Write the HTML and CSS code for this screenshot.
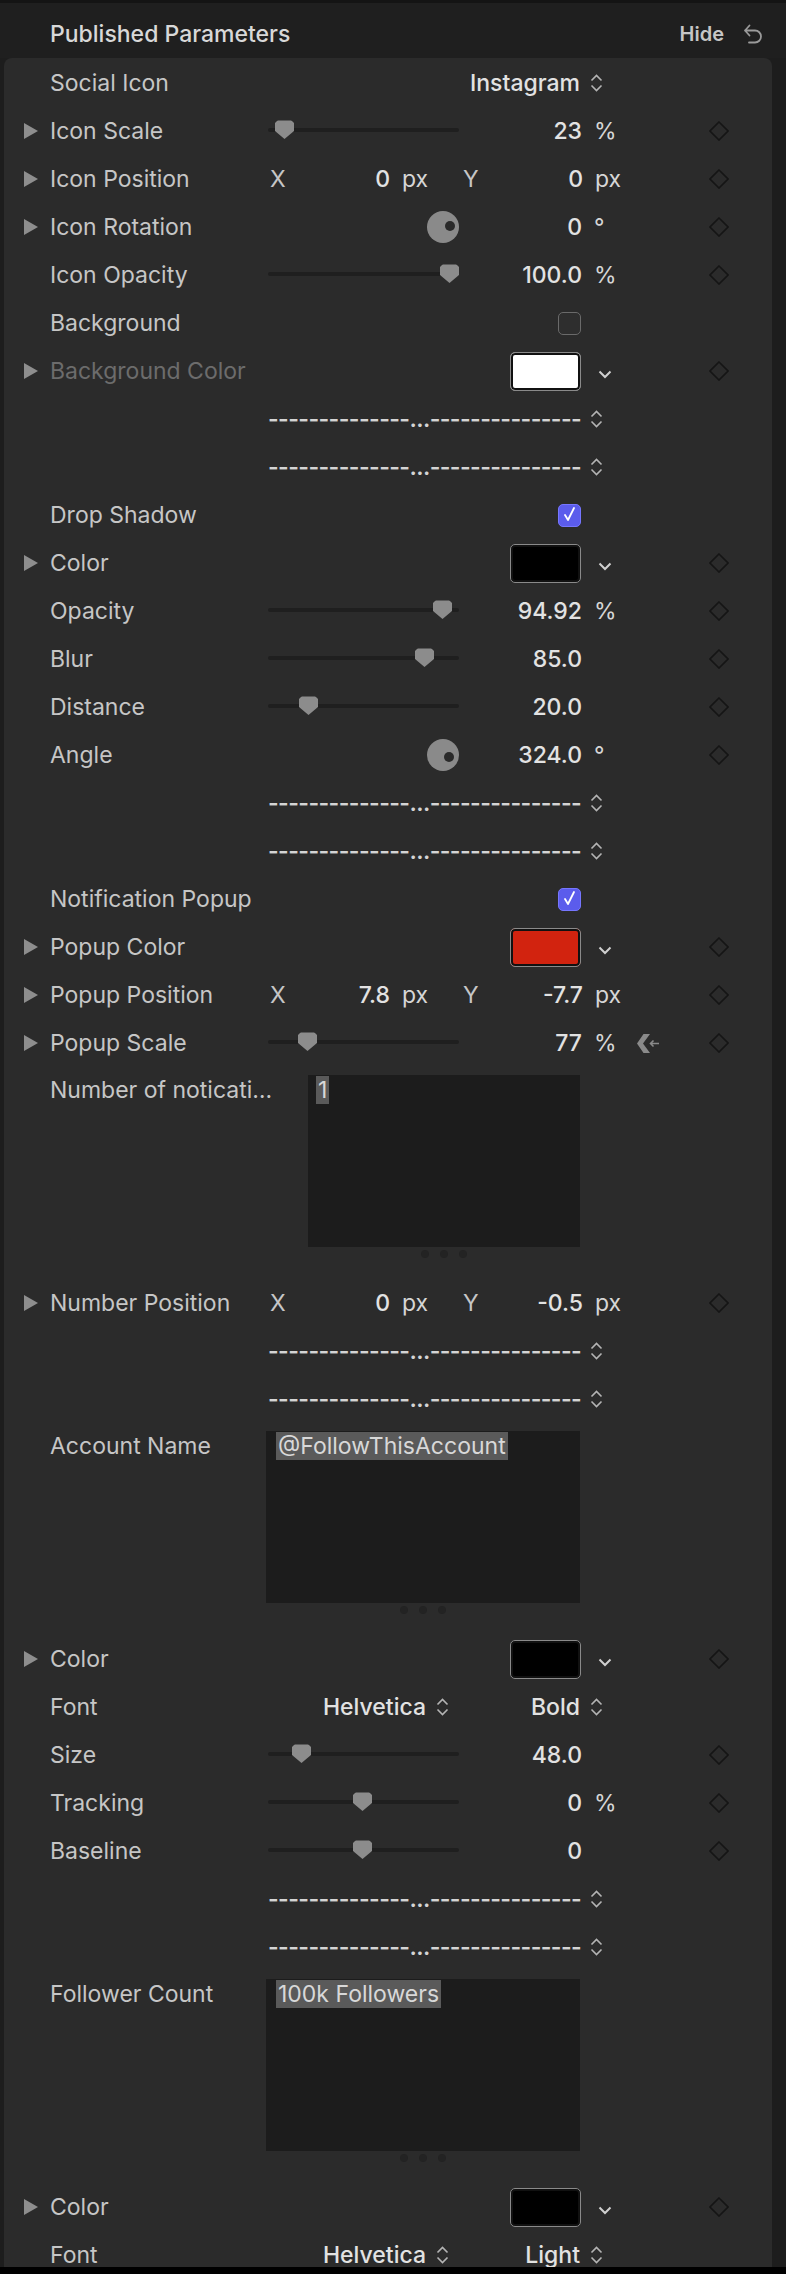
FILE: index.html
```html
<!DOCTYPE html>
<html lang="en">
<head>
    <meta charset="UTF-8">
    <meta name="viewport" content="width=device-width, initial-scale=1.0">
    <title>Published Parameters</title>
    <link rel="stylesheet" href="styles.css">
</head>
<body>
    <div class="inspector">
        <header class="header">
            <span class="title">Published Parameters</span>
            <span class="hide">Hide</span>
            <svg class="undo-icon" width="20" height="22" viewBox="0 0 20 22"><path d="M6.5 2.5 L2 7.5 L6.5 12.5 M2 7.5 H12 A6 6 0 0 1 12 19.5 H6" fill="none" stroke="#9a9a9a" stroke-width="1.8" stroke-linecap="round" stroke-linejoin="round"/></svg>
        </header>

        <div class="panel">
            <div class="param-row">
                <span></span>
                <span class="param-label">Social Icon</span>
                <div class="param-control">
                    <div class="widget"></div>
                    <span class="value popup-value">Instagram</span>
                    <svg class="updown" width="13" height="18" viewBox="0 0 13 18"><path d="M1.5 6.5 L6.5 1.5 L11.5 6.5 M1.5 11.5 L6.5 16.5 L11.5 11.5" fill="none" stroke="#b4b4b4" stroke-width="1.6"/></svg>
                </div>
                <span></span>
                <span></span>
            </div>

            <div class="param-row">
                <span class="disclosure"></span>
                <span class="param-label">Icon Scale</span>
                <div class="param-control">
                    <div class="widget"><div class="slider"><span class="slider-thumb" style="left: 7px"></span></div></div>
                    <span class="value">23</span>
                    <span class="unit">%</span>
                </div>
                <span></span>
                <span class="keyframe"><svg width="20" height="20" viewBox="0 0 20 20"><polygon points="10,1 19,10 10,19 1,10" fill="none" stroke="#151515" stroke-width="1.6"/></svg></span>
            </div>

            <div class="param-row">
                <span class="disclosure"></span>
                <span class="param-label">Icon Position</span>
                <div class="param-control point">
                    <span class="axis">X</span><span class="value">0</span><span class="unit">px</span>
                    <span class="axis">Y</span><span class="value">0</span><span class="unit">px</span>
                </div>
                <span></span>
                <span class="keyframe"><svg width="20" height="20" viewBox="0 0 20 20"><polygon points="10,1 19,10 10,19 1,10" fill="none" stroke="#151515" stroke-width="1.6"/></svg></span>
            </div>

            <div class="param-row">
                <span class="disclosure"></span>
                <span class="param-label">Icon Rotation</span>
                <div class="param-control">
                    <div class="widget"><span class="dial"><span class="dial-dot" style="left: 18px; top: 10px"></span></span></div>
                    <span class="value">0</span>
                    <span class="unit">°</span>
                </div>
                <span></span>
                <span class="keyframe"><svg width="20" height="20" viewBox="0 0 20 20"><polygon points="10,1 19,10 10,19 1,10" fill="none" stroke="#151515" stroke-width="1.6"/></svg></span>
            </div>

            <div class="param-row">
                <span></span>
                <span class="param-label">Icon Opacity</span>
                <div class="param-control">
                    <div class="widget"><div class="slider"><span class="slider-thumb" style="left: 172px"></span></div></div>
                    <span class="value">100.0</span>
                    <span class="unit">%</span>
                </div>
                <span></span>
                <span class="keyframe"><svg width="20" height="20" viewBox="0 0 20 20"><polygon points="10,1 19,10 10,19 1,10" fill="none" stroke="#151515" stroke-width="1.6"/></svg></span>
            </div>

            <div class="param-row">
                <span></span>
                <span class="param-label">Background</span>
                <div class="param-control">
                    <div class="widget"></div>
                    <span class="value"><span class="checkbox"></span></span>
                </div>
                <span></span>
                <span></span>
            </div>

            <div class="param-row">
                <span class="disclosure"></span>
                <span class="param-label dimmed">Background Color</span>
                <div class="param-control">
                    <div class="widget"></div>
                    <span class="value"><span class="color-well" style="background-color: #ffffff"></span></span>
                    <svg class="well-chevron" width="14" height="9" viewBox="0 0 14 9"><path d="M1.5 1.5 L7 7 L12.5 1.5" fill="none" stroke="#d0d0d0" stroke-width="2"/></svg>
                </div>
                <span></span>
                <span class="keyframe"><svg width="20" height="20" viewBox="0 0 20 20"><polygon points="10,1 19,10 10,19 1,10" fill="none" stroke="#151515" stroke-width="1.6"/></svg></span>
            </div>

            <div class="param-row">
                <span></span>
                <span></span>
                <div class="param-control">
                    <span class="dash-menu">--------------...---------------</span>
                    <svg class="updown" width="13" height="18" viewBox="0 0 13 18"><path d="M1.5 6.5 L6.5 1.5 L11.5 6.5 M1.5 11.5 L6.5 16.5 L11.5 11.5" fill="none" stroke="#b4b4b4" stroke-width="1.6"/></svg>
                </div>
                <span></span>
                <span></span>
            </div>

            <div class="param-row">
                <span></span>
                <span></span>
                <div class="param-control">
                    <span class="dash-menu">--------------...---------------</span>
                    <svg class="updown" width="13" height="18" viewBox="0 0 13 18"><path d="M1.5 6.5 L6.5 1.5 L11.5 6.5 M1.5 11.5 L6.5 16.5 L11.5 11.5" fill="none" stroke="#b4b4b4" stroke-width="1.6"/></svg>
                </div>
                <span></span>
                <span></span>
            </div>

            <div class="param-row">
                <span></span>
                <span class="param-label">Drop Shadow</span>
                <div class="param-control">
                    <div class="widget"></div>
                    <span class="value"><span class="checkbox checked"><svg width="23" height="23" viewBox="0 0 23 23"><path d="M7 12 L10 17 L16 5" fill="none" stroke="#ffffff" stroke-width="1.8" stroke-linecap="round" stroke-linejoin="round"/></svg></span></span>
                </div>
                <span></span>
                <span></span>
            </div>

            <div class="param-row">
                <span class="disclosure"></span>
                <span class="param-label">Color</span>
                <div class="param-control">
                    <div class="widget"></div>
                    <span class="value"><span class="color-well" style="background-color: #000000"></span></span>
                    <svg class="well-chevron" width="14" height="9" viewBox="0 0 14 9"><path d="M1.5 1.5 L7 7 L12.5 1.5" fill="none" stroke="#d0d0d0" stroke-width="2"/></svg>
                </div>
                <span></span>
                <span class="keyframe"><svg width="20" height="20" viewBox="0 0 20 20"><polygon points="10,1 19,10 10,19 1,10" fill="none" stroke="#151515" stroke-width="1.6"/></svg></span>
            </div>

            <div class="param-row">
                <span></span>
                <span class="param-label">Opacity</span>
                <div class="param-control">
                    <div class="widget"><div class="slider"><span class="slider-thumb" style="left: 165px"></span></div></div>
                    <span class="value">94.92</span>
                    <span class="unit">%</span>
                </div>
                <span></span>
                <span class="keyframe"><svg width="20" height="20" viewBox="0 0 20 20"><polygon points="10,1 19,10 10,19 1,10" fill="none" stroke="#151515" stroke-width="1.6"/></svg></span>
            </div>

            <div class="param-row">
                <span></span>
                <span class="param-label">Blur</span>
                <div class="param-control">
                    <div class="widget"><div class="slider"><span class="slider-thumb" style="left: 147px"></span></div></div>
                    <span class="value">85.0</span>
                </div>
                <span></span>
                <span class="keyframe"><svg width="20" height="20" viewBox="0 0 20 20"><polygon points="10,1 19,10 10,19 1,10" fill="none" stroke="#151515" stroke-width="1.6"/></svg></span>
            </div>

            <div class="param-row">
                <span></span>
                <span class="param-label">Distance</span>
                <div class="param-control">
                    <div class="widget"><div class="slider"><span class="slider-thumb" style="left: 31px"></span></div></div>
                    <span class="value">20.0</span>
                </div>
                <span></span>
                <span class="keyframe"><svg width="20" height="20" viewBox="0 0 20 20"><polygon points="10,1 19,10 10,19 1,10" fill="none" stroke="#151515" stroke-width="1.6"/></svg></span>
            </div>

            <div class="param-row">
                <span></span>
                <span class="param-label">Angle</span>
                <div class="param-control">
                    <div class="widget"><span class="dial"><span class="dial-dot" style="left: 17px; top: 13px"></span></span></div>
                    <span class="value">324.0</span>
                    <span class="unit">°</span>
                </div>
                <span></span>
                <span class="keyframe"><svg width="20" height="20" viewBox="0 0 20 20"><polygon points="10,1 19,10 10,19 1,10" fill="none" stroke="#151515" stroke-width="1.6"/></svg></span>
            </div>

            <div class="param-row">
                <span></span>
                <span></span>
                <div class="param-control">
                    <span class="dash-menu">--------------...---------------</span>
                    <svg class="updown" width="13" height="18" viewBox="0 0 13 18"><path d="M1.5 6.5 L6.5 1.5 L11.5 6.5 M1.5 11.5 L6.5 16.5 L11.5 11.5" fill="none" stroke="#b4b4b4" stroke-width="1.6"/></svg>
                </div>
                <span></span>
                <span></span>
            </div>

            <div class="param-row">
                <span></span>
                <span></span>
                <div class="param-control">
                    <span class="dash-menu">--------------...---------------</span>
                    <svg class="updown" width="13" height="18" viewBox="0 0 13 18"><path d="M1.5 6.5 L6.5 1.5 L11.5 6.5 M1.5 11.5 L6.5 16.5 L11.5 11.5" fill="none" stroke="#b4b4b4" stroke-width="1.6"/></svg>
                </div>
                <span></span>
                <span></span>
            </div>

            <div class="param-row">
                <span></span>
                <span class="param-label">Notification Popup</span>
                <div class="param-control">
                    <div class="widget"></div>
                    <span class="value"><span class="checkbox checked"><svg width="23" height="23" viewBox="0 0 23 23"><path d="M7 12 L10 17 L16 5" fill="none" stroke="#ffffff" stroke-width="1.8" stroke-linecap="round" stroke-linejoin="round"/></svg></span></span>
                </div>
                <span></span>
                <span></span>
            </div>

            <div class="param-row">
                <span class="disclosure"></span>
                <span class="param-label">Popup Color</span>
                <div class="param-control">
                    <div class="widget"></div>
                    <span class="value"><span class="color-well" style="background-color: #d2230f"></span></span>
                    <svg class="well-chevron" width="14" height="9" viewBox="0 0 14 9"><path d="M1.5 1.5 L7 7 L12.5 1.5" fill="none" stroke="#d0d0d0" stroke-width="2"/></svg>
                </div>
                <span></span>
                <span class="keyframe"><svg width="20" height="20" viewBox="0 0 20 20"><polygon points="10,1 19,10 10,19 1,10" fill="none" stroke="#151515" stroke-width="1.6"/></svg></span>
            </div>

            <div class="param-row">
                <span class="disclosure"></span>
                <span class="param-label">Popup Position</span>
                <div class="param-control point">
                    <span class="axis">X</span><span class="value">7.8</span><span class="unit">px</span>
                    <span class="axis">Y</span><span class="value">-7.7</span><span class="unit">px</span>
                </div>
                <span></span>
                <span class="keyframe"><svg width="20" height="20" viewBox="0 0 20 20"><polygon points="10,1 19,10 10,19 1,10" fill="none" stroke="#151515" stroke-width="1.6"/></svg></span>
            </div>

            <div class="param-row">
                <span class="disclosure"></span>
                <span class="param-label">Popup Scale</span>
                <div class="param-control">
                    <div class="widget"><div class="slider"><span class="slider-thumb" style="left: 30px"></span></div></div>
                    <span class="value">77</span>
                    <span class="unit">%</span>
                </div>
                <span class="link-icon"><svg width="22" height="19" viewBox="0 0 22 19"><polygon points="6.5,0 13,0 6,9.5 13,19 6.5,19 0,9.5" fill="#8a8a8a"/><path d="M22 9.5 H13.5 M16.5 6.5 L13.5 9.5 L16.5 12.5" fill="none" stroke="#8a8a8a" stroke-width="1.6"/></svg></span>
                <span class="keyframe"><svg width="20" height="20" viewBox="0 0 20 20"><polygon points="10,1 19,10 10,19 1,10" fill="none" stroke="#151515" stroke-width="1.6"/></svg></span>
            </div>

            <div class="text-row">
                <span class="param-label text-label wide">Number of notications</span>
                <div class="text-field narrow">
                    <div class="text-box"><span class="selected-text">1</span></div>
                    <div class="resize-dots"><span></span><span></span><span></span></div>
                </div>
            </div>

            <div class="param-row">
                <span class="disclosure"></span>
                <span class="param-label">Number Position</span>
                <div class="param-control point">
                    <span class="axis">X</span><span class="value">0</span><span class="unit">px</span>
                    <span class="axis">Y</span><span class="value">-0.5</span><span class="unit">px</span>
                </div>
                <span></span>
                <span class="keyframe"><svg width="20" height="20" viewBox="0 0 20 20"><polygon points="10,1 19,10 10,19 1,10" fill="none" stroke="#151515" stroke-width="1.6"/></svg></span>
            </div>

            <div class="param-row">
                <span></span>
                <span></span>
                <div class="param-control">
                    <span class="dash-menu">--------------...---------------</span>
                    <svg class="updown" width="13" height="18" viewBox="0 0 13 18"><path d="M1.5 6.5 L6.5 1.5 L11.5 6.5 M1.5 11.5 L6.5 16.5 L11.5 11.5" fill="none" stroke="#b4b4b4" stroke-width="1.6"/></svg>
                </div>
                <span></span>
                <span></span>
            </div>

            <div class="param-row">
                <span></span>
                <span></span>
                <div class="param-control">
                    <span class="dash-menu">--------------...---------------</span>
                    <svg class="updown" width="13" height="18" viewBox="0 0 13 18"><path d="M1.5 6.5 L6.5 1.5 L11.5 6.5 M1.5 11.5 L6.5 16.5 L11.5 11.5" fill="none" stroke="#b4b4b4" stroke-width="1.6"/></svg>
                </div>
                <span></span>
                <span></span>
            </div>

            <div class="text-row">
                <span class="param-label text-label">Account Name</span>
                <div class="text-field">
                    <div class="text-box"><span class="selected-text">@FollowThisAccount</span></div>
                    <div class="resize-dots"><span></span><span></span><span></span></div>
                </div>
            </div>

            <div class="param-row">
                <span class="disclosure"></span>
                <span class="param-label">Color</span>
                <div class="param-control">
                    <div class="widget"></div>
                    <span class="value"><span class="color-well" style="background-color: #000000"></span></span>
                    <svg class="well-chevron" width="14" height="9" viewBox="0 0 14 9"><path d="M1.5 1.5 L7 7 L12.5 1.5" fill="none" stroke="#d0d0d0" stroke-width="2"/></svg>
                </div>
                <span></span>
                <span class="keyframe"><svg width="20" height="20" viewBox="0 0 20 20"><polygon points="10,1 19,10 10,19 1,10" fill="none" stroke="#151515" stroke-width="1.6"/></svg></span>
            </div>

            <div class="param-row">
                <span></span>
                <span class="param-label">Font</span>
                <div class="param-control">
                    <div class="widget font-family">
                        <span class="popup-value">Helvetica</span>
                        <svg class="updown" width="13" height="18" viewBox="0 0 13 18"><path d="M1.5 6.5 L6.5 1.5 L11.5 6.5 M1.5 11.5 L6.5 16.5 L11.5 11.5" fill="none" stroke="#b4b4b4" stroke-width="1.6"/></svg>
                    </div>
                    <span class="value popup-value">Bold</span>
                    <svg class="updown" width="13" height="18" viewBox="0 0 13 18"><path d="M1.5 6.5 L6.5 1.5 L11.5 6.5 M1.5 11.5 L6.5 16.5 L11.5 11.5" fill="none" stroke="#b4b4b4" stroke-width="1.6"/></svg>
                </div>
                <span></span>
                <span></span>
            </div>

            <div class="param-row">
                <span></span>
                <span class="param-label">Size</span>
                <div class="param-control">
                    <div class="widget"><div class="slider"><span class="slider-thumb" style="left: 24px"></span></div></div>
                    <span class="value">48.0</span>
                </div>
                <span></span>
                <span class="keyframe"><svg width="20" height="20" viewBox="0 0 20 20"><polygon points="10,1 19,10 10,19 1,10" fill="none" stroke="#151515" stroke-width="1.6"/></svg></span>
            </div>

            <div class="param-row">
                <span></span>
                <span class="param-label">Tracking</span>
                <div class="param-control">
                    <div class="widget"><div class="slider"><span class="slider-thumb" style="left: 85px"></span></div></div>
                    <span class="value">0</span>
                    <span class="unit">%</span>
                </div>
                <span></span>
                <span class="keyframe"><svg width="20" height="20" viewBox="0 0 20 20"><polygon points="10,1 19,10 10,19 1,10" fill="none" stroke="#151515" stroke-width="1.6"/></svg></span>
            </div>

            <div class="param-row">
                <span></span>
                <span class="param-label">Baseline</span>
                <div class="param-control">
                    <div class="widget"><div class="slider"><span class="slider-thumb" style="left: 85px"></span></div></div>
                    <span class="value">0</span>
                </div>
                <span></span>
                <span class="keyframe"><svg width="20" height="20" viewBox="0 0 20 20"><polygon points="10,1 19,10 10,19 1,10" fill="none" stroke="#151515" stroke-width="1.6"/></svg></span>
            </div>

            <div class="param-row">
                <span></span>
                <span></span>
                <div class="param-control">
                    <span class="dash-menu">--------------...---------------</span>
                    <svg class="updown" width="13" height="18" viewBox="0 0 13 18"><path d="M1.5 6.5 L6.5 1.5 L11.5 6.5 M1.5 11.5 L6.5 16.5 L11.5 11.5" fill="none" stroke="#b4b4b4" stroke-width="1.6"/></svg>
                </div>
                <span></span>
                <span></span>
            </div>

            <div class="param-row">
                <span></span>
                <span></span>
                <div class="param-control">
                    <span class="dash-menu">--------------...---------------</span>
                    <svg class="updown" width="13" height="18" viewBox="0 0 13 18"><path d="M1.5 6.5 L6.5 1.5 L11.5 6.5 M1.5 11.5 L6.5 16.5 L11.5 11.5" fill="none" stroke="#b4b4b4" stroke-width="1.6"/></svg>
                </div>
                <span></span>
                <span></span>
            </div>

            <div class="text-row">
                <span class="param-label text-label">Follower Count</span>
                <div class="text-field">
                    <div class="text-box"><span class="selected-text">100k Followers</span></div>
                    <div class="resize-dots"><span></span><span></span><span></span></div>
                </div>
            </div>

            <div class="param-row">
                <span class="disclosure"></span>
                <span class="param-label">Color</span>
                <div class="param-control">
                    <div class="widget"></div>
                    <span class="value"><span class="color-well" style="background-color: #000000"></span></span>
                    <svg class="well-chevron" width="14" height="9" viewBox="0 0 14 9"><path d="M1.5 1.5 L7 7 L12.5 1.5" fill="none" stroke="#d0d0d0" stroke-width="2"/></svg>
                </div>
                <span></span>
                <span class="keyframe"><svg width="20" height="20" viewBox="0 0 20 20"><polygon points="10,1 19,10 10,19 1,10" fill="none" stroke="#151515" stroke-width="1.6"/></svg></span>
            </div>

            <div class="param-row">
                <span></span>
                <span class="param-label">Font</span>
                <div class="param-control">
                    <div class="widget font-family">
                        <span class="popup-value">Helvetica</span>
                        <svg class="updown" width="13" height="18" viewBox="0 0 13 18"><path d="M1.5 6.5 L6.5 1.5 L11.5 6.5 M1.5 11.5 L6.5 16.5 L11.5 11.5" fill="none" stroke="#b4b4b4" stroke-width="1.6"/></svg>
                    </div>
                    <span class="value popup-value">Light</span>
                    <svg class="updown" width="13" height="18" viewBox="0 0 13 18"><path d="M1.5 6.5 L6.5 1.5 L11.5 6.5 M1.5 11.5 L6.5 16.5 L11.5 11.5" fill="none" stroke="#b4b4b4" stroke-width="1.6"/></svg>
                </div>
                <span></span>
                <span></span>
            </div>
        </div>
    </div>
    <div class="bottom-bar"></div>
</body>
</html>
```

FILE: styles.css
```css
body {
    margin: 0;
    background-color: #1d1d1d;
    font-family: Inter, "Noto Sans", sans-serif;
    font-size: 23px;
    color: #c6c6c6;
}

.inspector {
    height: 2264px;
    overflow: hidden;
    border-top: 3px solid #141414;
}

.bottom-bar {
    height: 7px;
    background: #000;
}

/* header */
.header {
    display: flex;
    align-items: center;
    height: 48px;
    padding: 7px 23px 0 50px;
    background-color: #1f1f1f;
}

.title {
    font-weight: 500;
    color: #d8d8d8;
}

.hide {
    margin-left: auto;
    font-size: 20px;
    font-weight: 600;
    color: #c6c6c6;
}

.undo-icon {
    margin-left: 19px;
}

/* panel */
.panel {
    margin: 0 14px 0 4px;
    padding-top: 1px;
    background-color: #2b2b2b;
    border-radius: 8px 8px 0 0;
}

.param-row {
    display: grid;
    grid-template-columns: 46px 218px 354px 78px 38px;
    align-items: center;
    height: 48px;
}

.disclosure {
    width: 0;
    height: 0;
    margin-left: 20px;
    border-left: 14px solid #8e8e8e;
    border-top: 8px solid transparent;
    border-bottom: 8px solid transparent;
}

.param-label {
    white-space: nowrap;
}

.param-label.dimmed {
    color: #6c6c6c;
}

.param-control {
    display: flex;
    align-items: center;
    height: 48px;
}

.param-control > * {
    flex-shrink: 0;
}

.widget {
    display: flex;
    align-items: center;
    width: 191px;
    height: 100%;
}

.value {
    display: flex;
    justify-content: flex-end;
    align-items: center;
    width: 123px;
    color: #e2e2e2;
    font-weight: 500;
    white-space: nowrap;
}

.unit {
    margin-left: 12px;
    color: #d6d6d6;
}

.popup-value {
    color: #e2e2e2;
    font-weight: 500;
}

.value.popup-value {
    padding-right: 2px;
    box-sizing: border-box;
}

.updown {
    margin-left: 8px;
}

.font-family {
    justify-content: flex-end;
    padding-right: 10px;
    box-sizing: border-box;
}

.font-family .updown {
    margin-left: 10px;
}

/* slider */
.slider {
    position: relative;
    width: 100%;
    height: 4px;
    margin-top: -3px;
    background-color: #1f1f1f;
    border-radius: 2px;
}

.slider-thumb {
    position: absolute;
    top: 50%;
    width: 19px;
    height: 19px;
    transform: translateY(-50%);
    background-color: #8c8c8c;
    clip-path: polygon(0 16%, 16% 0, 84% 0, 100% 16%, 100% 58%, 50% 100%, 0 58%);
}

/* dial */
.dial {
    position: relative;
    width: 32px;
    height: 32px;
    margin-left: auto;
    border-radius: 50%;
    background-color: #8a8a8a;
}

.dial-dot {
    position: absolute;
    width: 10px;
    height: 10px;
    border-radius: 50%;
    background-color: #2a2a2a;
}

/* point (x / y) */
.point .axis {
    width: 30px;
    padding-left: 2px;
    box-sizing: border-box;
}

.point .value {
    width: 92px;
}

.point .unit {
    width: 59px;
}

/* checkbox */
.checkbox {
    display: block;
    width: 23px;
    height: 23px;
    margin-right: 1px;
    box-sizing: border-box;
    border: 1.5px solid #6a6a6a;
    border-radius: 5px;
    background-color: #2e2e2e;
}

.checkbox.checked {
    border-color: #7676ff;
    background-color: #5b5cec;
}

.checkbox svg {
    display: block;
    margin: -1.5px;
}

/* color well */
.color-well {
    display: block;
    width: 71px;
    height: 39px;
    margin-right: 1px;
    box-sizing: border-box;
    border: 1.5px solid #8a8a8a;
    border-radius: 5px;
    box-shadow: inset 0 0 0 2px #111;
}

.well-chevron {
    margin: 6px 0 0 16px;
}

/* dash menus */
.dash-menu {
    width: 314px;
    white-space: nowrap;
    color: #d4d4d4;
    font-weight: 600;
    letter-spacing: -0.6px;
}

.link-icon {
    display: flex;
    padding-left: 15px;
}

.keyframe {
    display: flex;
    padding-left: 9px;
}

/* text fields */
.text-row {
    display: flex;
    height: 212px;
    padding-left: 46px;
}

.text-label {
    width: 216px;
    line-height: 46px;
}

.text-label.wide {
    width: 258px;
    padding-right: 25px;
    box-sizing: border-box;
    overflow: hidden;
    text-overflow: ellipsis;
}

.text-field {
    width: 314px;
    padding-top: 8px;
}

.text-field.narrow {
    width: 272px;
}

.text-box {
    height: 172px;
    padding: 0 10px;
    background-color: #1c1c1c;
    line-height: 31px;
}

.narrow .text-box {
    padding: 0 8px;
}

.selected-text {
    padding: 0 2px;
    background-color: #5a5a5a;
    color: #d8d8d8;
}

.resize-dots {
    display: flex;
    justify-content: center;
    gap: 11px;
    margin-top: 3px;
}

.resize-dots span {
    width: 8px;
    height: 8px;
    border-radius: 50%;
    background-color: #232323;
}
```
